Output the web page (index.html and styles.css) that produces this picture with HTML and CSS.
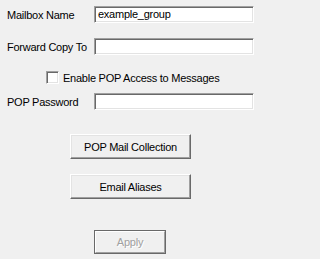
FILE: index.html
```html
<!DOCTYPE html>
<html>
<head>
<meta charset="utf-8">
<link rel="stylesheet" href="styles.css">
</head>
<body>
<div class="form">
  <div class="row">
    <span class="label">Mailbox Name</span>
    <div class="field">example_group</div>
  </div>
  <div class="row row-gap">
    <span class="label">Forward Copy To</span>
    <div class="field"></div>
  </div>
  <div class="check-row">
    <span class="checkbox"></span>
    <span class="check-label">Enable POP Access to Messages</span>
  </div>
  <div class="row row-pass">
    <span class="label">POP Password</span>
    <div class="field"></div>
  </div>
  <div class="btn btn-first">POP Mail Collection</div>
  <div class="btn btn-second">Email Aliases</div>
  <div class="apply-wrap"><div class="apply">Apply</div></div>
</div>
</body>
</html>
```
FILE: styles.css
```css
html, body {
  margin: 0;
  padding: 0;
  background: #f0f0f0;
}
body {
  width: 258px;
  height: 259px;
  overflow: hidden;
  font-family: "Liberation Sans", Arial, sans-serif;
  font-size: 11px;
  letter-spacing: -0.25px;
  color: #000;
}
.form {
  display: flex;
  flex-direction: column;
  padding-top: 6px;
}
.row {
  display: flex;
  align-items: center;
  height: 17px;
  padding-left: 7px;
}
.row-gap { margin-top: 15px; }
.row-pass { margin-top: 9px; }
.label {
  width: 87px;
  flex: none;
}
.field {
  box-sizing: border-box;
  width: 160px;
  height: 17px;
  background: #fff;
  border: 1px solid;
  border-color: #a0a0a0 #fff #fff #a0a0a0;
  box-shadow: inset 1px 1px #696969, inset -1px -1px #e3e3e3;
  padding-left: 3px;
  line-height: 14px;
  white-space: nowrap;
}
.check-row {
  display: flex;
  align-items: center;
  height: 13px;
  margin-top: 16px;
  padding-left: 46px;
}
.checkbox {
  box-sizing: border-box;
  width: 13px;
  height: 13px;
  background: #fff;
  border: 1px solid;
  border-color: #a0a0a0 #fff #fff #a0a0a0;
  box-shadow: inset 1px 1px #696969, inset -1px -1px #e3e3e3;
  margin-right: 4px;
}
.btn {
  box-sizing: border-box;
  width: 121px;
  height: 25px;
  margin-left: 70px;
  border: 1px solid;
  border-color: #fff #696969 #696969 #fff;
  box-shadow: inset -1px -1px #a0a0a0, inset 1px 1px #e3e3e3;
  background: #f0f0f0;
  display: flex;
  align-items: center;
  justify-content: center;
  letter-spacing: -0.25px;
}
.btn-first { margin-top: 24px; }
.btn-second { margin-top: 15px; }
.apply-wrap {
  margin-top: 31px;
  margin-left: 94px;
  width: 72px;
  height: 24px;
  box-sizing: border-box;
  border: 1px solid #696969;
}
.apply {
  box-sizing: border-box;
  width: 100%;
  height: 100%;
  border: 1px solid;
  border-color: #fff #a0a0a0 #a0a0a0 #fff;
  display: flex;
  align-items: center;
  justify-content: center;
  color: #a0a0a0;
  text-shadow: 1px 1px #fff;
}
```
